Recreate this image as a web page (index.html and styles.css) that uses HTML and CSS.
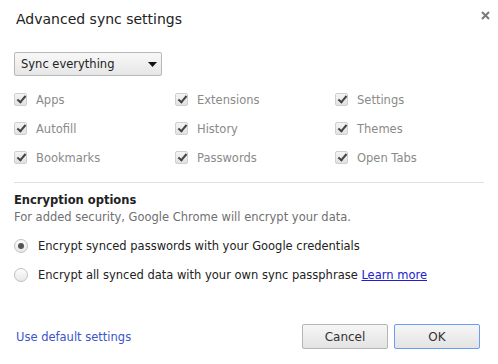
FILE: index.html
```html
<!DOCTYPE html>
<html>
<head>
    <title>Advanced sync settings</title>
    <link rel="stylesheet" href="styles.css">
</head>
<body>
    <div class="dialog">
        <div class="header">
            <h1>Advanced sync settings</h1>
            <span class="close">
                <svg width="9" height="9" viewBox="0 0 9 9"><path d="M1 1L8 8M8 1L1 8" stroke="#7a7a7a" stroke-width="2"/></svg>
            </span>
        </div>

        <div class="select">
            <span>Sync everything</span>
            <svg width="9" height="5" viewBox="0 0 9 5"><path d="M0 0H9L4.5 5Z" fill="#111"/></svg>
        </div>

        <!-- Data types -->
        <div class="types">
            <label class="check"><span class="box"></span>Apps</label>
            <label class="check"><span class="box"></span>Extensions</label>
            <label class="check"><span class="box"></span>Settings</label>
            <label class="check"><span class="box"></span>Autofill</label>
            <label class="check"><span class="box"></span>History</label>
            <label class="check"><span class="box"></span>Themes</label>
            <label class="check"><span class="box"></span>Bookmarks</label>
            <label class="check"><span class="box"></span>Passwords</label>
            <label class="check"><span class="box"></span>Open Tabs</label>
        </div>

        <div class="divider"></div>

        <!-- Encryption -->
        <div class="section">
            <h2>Encryption options</h2>
            <p class="note">For added security, Google Chrome will encrypt your data.</p>
            <label class="radio"><span class="dot checked"></span>Encrypt synced passwords with your Google credentials</label>
            <label class="radio"><span class="dot"></span>Encrypt all synced data with your own sync passphrase&nbsp;<a href="#">Learn more</a></label>
        </div>

        <div class="footer">
            <a href="#" class="plain">Use default settings</a>
            <div class="buttons">
                <button>Cancel</button>
                <button class="primary">OK</button>
            </div>
        </div>
    </div>
</body>
</html>
```

FILE: styles.css
```css
body {
    font-family: "DejaVu Sans", sans-serif;
    font-size: 11.5px;
    color: #333;
    background: #ffffff;
    margin: 0;
}
.dialog {
    width: 498px;
    height: 364px;
    box-sizing: border-box;
    padding: 9px 14px 0 14px;
}
.header {
    display: flex;
    justify-content: space-between;
    align-items: flex-start;
}
h1 {
    margin: 0 0 0 2px;
    font-size: 14px;
    font-weight: normal;
    line-height: 20px;
    color: #222;
}
.close {
    margin: 0 -6px 0 0;
    display: block;
}
.select {
    margin-top: 23px;
    width: 148px;
    height: 24px;
    box-sizing: border-box;
    border: 1px solid #b8b8b8;
    border-radius: 2px;
    background: linear-gradient(#f8f8f8, #e6e6e6);
    display: flex;
    align-items: center;
    justify-content: space-between;
    padding: 0 4px 0 6px;
    color: #222;
}
.types {
    display: grid;
    grid-template-columns: 161px 160px 1fr;
    grid-auto-rows: 29px;
    margin-top: 9px;
}
.check {
    display: flex;
    align-items: center;
    color: #8a8a8a;
}
.box {
    width: 11px;
    height: 11px;
    border: 1px solid #cfcfcf;
    border-radius: 2px;
    background: linear-gradient(#f4f4f4, #e2e2e2);
    margin-right: 9px;
    position: relative;
}
.box::after {
    content: "";
    position: absolute;
    left: 4px;
    top: 0px;
    width: 3px;
    height: 7px;
    border: solid #444;
    border-width: 0 2px 2px 0;
    transform: rotate(40deg);
}
.divider {
    margin-top: 10px;
    height: 1px;
    background: #e0e0e0;
}
h2 {
    margin: 9px 0 0 0;
    font-size: 11.5px;
    line-height: 16px;
    font-weight: bold;
    color: #222;
}
.note {
    margin: 0;
    line-height: 18px;
    color: #707070;
}
.radio {
    display: flex;
    align-items: center;
    height: 29px;
    color: #222;
}
.section .radio:first-of-type {
    margin-top: 5px;
}
.dot {
    width: 12px;
    height: 12px;
    border: 1px solid #c0c0c0;
    border-radius: 50%;
    background: linear-gradient(#fdfdfd, #e8e8e8);
    margin-right: 10px;
    position: relative;
}
.dot.checked::after {
    content: "";
    position: absolute;
    left: 3px;
    top: 3px;
    width: 6px;
    height: 6px;
    border-radius: 50%;
    background: #555;
}
a {
    color: #2020d0;
}
.footer {
    margin-top: 35px;
    display: flex;
    justify-content: space-between;
    align-items: center;
}
.plain {
    text-decoration: none;
    color: #3a55c8;
    margin-left: 2px;
}
.buttons {
    display: flex;
    gap: 6px;
    margin-right: 4px;
}
button {
    width: 86px;
    height: 25px;
    font-family: "DejaVu Sans", sans-serif;
    font-size: 12px;
    color: #333;
    border: 1px solid #b5b5b5;
    border-radius: 2px;
    background: linear-gradient(#f6f6f6, #e3e3e3);
}
button.primary {
    border-color: #6a9ef2;
}
```
